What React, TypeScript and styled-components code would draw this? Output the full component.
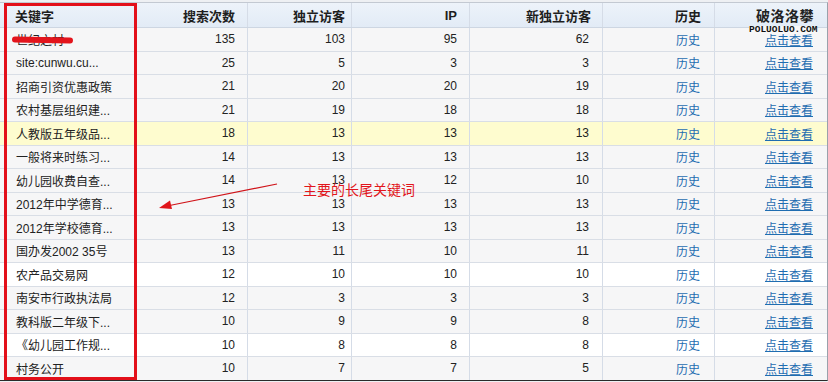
import styled, { createGlobalStyle } from "styled-components";

const GlobalStyle = createGlobalStyle`
  html, body {
    margin: 0;
    padding: 0;
    background: #eef0f3;
  }
  body {
    font-family: "Liberation Sans", "Noto Sans CJK SC", Arial, sans-serif;
    font-size: 12px;
    color: #222;
  }
`;

const COLS = "137px 111px 104px 118px 133px 112px 1fr";

const Page = styled.div`
  position: relative;
  width: 828px;
  height: 382px;
  padding-top: 2px;
  box-sizing: border-box;
  overflow: hidden;
`;

const Table = styled.div`
  background: #fff;
  border-top: 1px solid #c3c9d2;
  border-bottom: 1px solid #2a2a2a;
  border-right: 1px solid #9aa1ab;
`;

const HeadRow = styled.div`
  display: grid;
  grid-template-columns: ${COLS};
  height: 25px;
  box-sizing: border-box;
  border-bottom: 1px solid #cdd6e2;
  background: linear-gradient(#edf3fa, #e2ebf6);
`;

const Row = styled.div<{ $bg: string }>`
  display: grid;
  grid-template-columns: ${COLS};
  height: 23.5px;
  box-sizing: border-box;
  border-bottom: 1px solid #d9dee6;
  background: ${(p) => p.$bg};
  &:last-child {
    border-bottom: none;
    height: 22.5px;
  }
`;

const Cell = styled.div<{ $left?: boolean; $pr?: number }>`
  display: flex;
  align-items: center;
  justify-content: ${(p) => (p.$left ? "flex-start" : "flex-end")};
  padding-left: ${(p) => (p.$left ? "16px" : "0")};
  padding-right: ${(p) => p.$pr ?? 12}px;
  border-right: 1px solid #d5dce7;
  white-space: nowrap;
  overflow: hidden;
  position: relative;
  &:last-child {
    border-right: none;
  }
`;

const HeadCell = styled(Cell)`
  font-weight: bold;
  font-size: 13px;
  color: #1e1e1e;
  padding-left: ${(p) => (p.$left ? "15px" : "0")};
`;

const Brand = styled.span`
  font-weight: bold;
  font-size: 14px;
  letter-spacing: 0.5px;
  color: #222;
`;

const Link = styled.a<{ $underline?: boolean }>`
  color: #1f6db1;
  font-size: 12px;
  text-decoration: ${(p) => (p.$underline ? "underline" : "none")};
  text-underline-offset: 1px;
  cursor: pointer;
`;

const Smear = styled.span`
  position: absolute;
  left: 12px;
  top: 9px;
  width: 61px;
  height: 6px;
  border-radius: 4px;
  background: #e3141c;
  transform: rotate(1deg);
`;

const Watermark = styled.span`
  position: absolute;
  left: 749px;
  top: 26px;
  font-family: "Liberation Mono", "DejaVu Sans Mono", monospace;
  font-weight: bold;
  font-size: 9.5px;
  line-height: 8px;
  color: #111;
  background: #f7f7f8;
`;

const RedBox = styled.div`
  position: absolute;
  left: 4px;
  top: 3px;
  width: 133px;
  height: 377px;
  box-sizing: border-box;
  border: 3px solid #e3101a;
  pointer-events: none;
`;

const Note = styled.span`
  position: absolute;
  left: 303px;
  top: 179px;
  font-size: 14px;
  color: #e2161c;
  font-family: "Noto Sans CJK SC", sans-serif;
`;

const Arrow = styled.svg`
  position: absolute;
  left: 155px;
  top: 178px;
`;

type Rec = { kw: string; a: number; b: number; c: number; d: number; bg: string };

const GRAY = "#f6f6f7";
const WHITE = "#ffffff";
const YELLOW = "#fefccf";

const rows: Rec[] = [
  { kw: "世纪之村", a: 135, b: 103, c: 95, d: 62, bg: GRAY },
  { kw: "site:cunwu.cu...", a: 25, b: 5, c: 3, d: 3, bg: GRAY },
  { kw: "招商引资优惠政策", a: 21, b: 20, c: 20, d: 19, bg: GRAY },
  { kw: "农村基层组织建...", a: 21, b: 19, c: 18, d: 18, bg: GRAY },
  { kw: "人教版五年级品...", a: 18, b: 13, c: 13, d: 13, bg: YELLOW },
  { kw: "一般将来时练习...", a: 14, b: 13, c: 13, d: 13, bg: GRAY },
  { kw: "幼儿园收费自查...", a: 14, b: 13, c: 12, d: 10, bg: GRAY },
  { kw: "2012年中学德育...", a: 13, b: 13, c: 13, d: 13, bg: GRAY },
  { kw: "2012年学校德育...", a: 13, b: 13, c: 13, d: 13, bg: GRAY },
  { kw: "国办发2002 35号", a: 13, b: 11, c: 10, d: 11, bg: GRAY },
  { kw: "农产品交易网", a: 12, b: 10, c: 10, d: 10, bg: WHITE },
  { kw: "南安市行政执法局", a: 12, b: 3, c: 3, d: 3, bg: GRAY },
  { kw: "教科版二年级下...", a: 10, b: 9, c: 9, d: 8, bg: GRAY },
  { kw: "《幼儿园工作规...", a: 10, b: 8, c: 8, d: 8, bg: WHITE },
  { kw: "村务公开", a: 10, b: 7, c: 7, d: 5, bg: GRAY },
];

export default function App() {
  return (
    <Page>
      <GlobalStyle />
      <Table>
        <HeadRow>
          <HeadCell $left>关键字</HeadCell>
          <HeadCell $pr={12}>搜索次数</HeadCell>
          <HeadCell $pr={6}>独立访客</HeadCell>
          <HeadCell $pr={12}>IP</HeadCell>
          <HeadCell $pr={11}>新独立访客</HeadCell>
          <HeadCell $pr={13}>历史</HeadCell>
          <HeadCell $pr={13}>
            <Brand>破洛洛攀</Brand>
          </HeadCell>
        </HeadRow>
        {rows.map((r, i) => (
          <Row key={i} $bg={r.bg}>
            <Cell $left>
              {r.kw}
              {i === 0 && <Smear />}
            </Cell>
            <Cell $pr={12}>{r.a}</Cell>
            <Cell $pr={6}>{r.b}</Cell>
            <Cell $pr={12}>{r.c}</Cell>
            <Cell $pr={13}>{r.d}</Cell>
            <Cell $pr={14}>
              <Link>历史</Link>
            </Cell>
            <Cell $pr={14}>
              <Link $underline>点击查看</Link>
            </Cell>
          </Row>
        ))}
      </Table>

      <Watermark>POLUOLUO.COM</Watermark>
      <RedBox />
      <Note>主要的长尾关键词</Note>
      <Arrow width="126" height="34" viewBox="0 0 126 34">
        <line x1="122" y1="6" x2="12" y2="28" stroke="#d0141a" strokeWidth="1.2" />
        <polygon points="4,30 15,22.5 17,31" fill="#e0141a" />
      </Arrow>
    </Page>
  );
}
